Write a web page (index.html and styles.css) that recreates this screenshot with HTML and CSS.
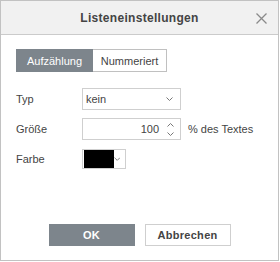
FILE: index.html
```html
<!DOCTYPE html>
<html lang="de">
<head>
  <meta charset="UTF-8">
  <title>Listeneinstellungen</title>
  <link rel="stylesheet" href="styles.css">
</head>
<body>

  <div class="dialog">
    <div class="dialog-header">
      <span class="dialog-title">Listeneinstellungen</span>
      <span class="close-btn">
        <svg width="11" height="11" viewBox="0 0 11 11"><path d="M0.5 0.5L10.5 10.5M10.5 0.5L0.5 10.5" stroke="#8a8a8a" stroke-width="1.3" fill="none"/></svg>
      </span>
    </div>

    <div class="dialog-body">
      <div class="tabs">
        <div class="tab active">Aufzählung</div>
        <div class="tab">Nummeriert</div>
      </div>

      <div class="form-row">
        <label>Typ</label>
        <div class="field select-field">
          <span class="field-text">kein</span>
          <svg class="chevron" width="7" height="4" viewBox="0 0 7 4"><path d="M0.5 0.5L3.5 3.5L6.5 0.5" stroke="#777" fill="none"/></svg>
        </div>
      </div>

      <div class="form-row">
        <label>Größe</label>
        <div class="field spin-field">
          <span class="field-text">100</span>
          <span class="spinner">
            <svg width="7" height="4" viewBox="0 0 7 4"><path d="M0.5 3.5L3.5 0.5L6.5 3.5" stroke="#777" fill="none"/></svg>
            <svg width="7" height="4" viewBox="0 0 7 4"><path d="M0.5 0.5L3.5 3.5L6.5 0.5" stroke="#777" fill="none"/></svg>
          </span>
        </div>
        <span class="unit">% des Textes</span>
      </div>

      <div class="form-row">
        <label>Farbe</label>
        <div class="field color-field">
          <span class="swatch"></span>
          <svg class="chevron" width="7" height="4" viewBox="0 0 7 4"><path d="M0.5 0.5L3.5 3.5L6.5 0.5" stroke="#777" fill="none"/></svg>
        </div>
      </div>
    </div>

    <div class="dialog-footer">
      <button class="button primary">OK</button>
      <button class="button">Abbrechen</button>
    </div>
  </div>

</body>
</html>
```

FILE: styles.css
```css
* {
  box-sizing: border-box;
}

body {
  margin: 0;
  background-color: #fff;
  font-family: Arial, "Liberation Sans", sans-serif;
  font-size: 11px;
  color: #444;
}

.dialog {
  width: 279px;
  height: 261px;
  border: 1px solid #c2c2c2;
  display: flex;
  flex-direction: column;
  background-color: white;
}

.dialog-header {
  height: 34px;
  background-color: #f1f1f1;
  border-bottom: 1px solid #cbcbcb;
  display: flex;
  align-items: center;
  justify-content: center;
  position: relative;
}

.dialog-title {
  font-size: 12px;
  font-weight: bold;
  color: #444;
  letter-spacing: 0.3px;
}

.close-btn {
  position: absolute;
  right: 11px;
  top: 12px;
  display: flex;
}

.dialog-body {
  padding: 14px 15px 0;
}

.tabs {
  display: flex;
  height: 23px;
  margin-bottom: 16px;
}

.tab {
  display: flex;
  align-items: center;
  justify-content: center;
  border: 1px solid #c0c0c0;
  background-color: white;
  color: #444;
}

.tab:first-child {
  width: 77px;
}

.tab:last-child {
  width: 74px;
  border-left: none;
}

.tab.active {
  background-color: #7d858c;
  border-color: #7d858c;
  color: white;
}

.form-row {
  display: flex;
  align-items: center;
  margin-bottom: 8px;
}

.form-row label {
  width: 66px;
}

.field {
  height: 22px;
  border: 1px solid #cfcfcf;
  display: flex;
  align-items: center;
  background-color: white;
}

.select-field {
  width: 99px;
  padding: 0 7px 0 3px;
  justify-content: space-between;
}

.spin-field {
  width: 99px;
  padding: 0 6px 0 3px;
  justify-content: flex-end;
}

.spin-field .field-text {
  margin-right: 8px;
}

.spinner {
  display: flex;
  flex-direction: column;
  gap: 5px;
}

.spinner svg {
  display: block;
}

.unit {
  margin-left: 7px;
}

.color-field {
  width: 44px;
  height: 20px;
  padding: 1px 5px 1px 1px;
  justify-content: space-between;
  margin-top: 1px;
}

.swatch {
  width: 32px;
  height: 18px;
  background-color: #000;
}

.dialog-footer {
  margin-top: auto;
  display: flex;
  justify-content: center;
  gap: 10px;
  padding-bottom: 14px;
}

.button {
  width: 86px;
  height: 22px;
  border: 1px solid #cfcfcf;
  background-color: white;
  font-family: Arial, "Liberation Sans", sans-serif;
  font-size: 11px;
  font-weight: bold;
  color: #444;
  letter-spacing: 0.3px;
  padding: 0;
}

.button.primary {
  background-color: #7d858c;
  border-color: #7d858c;
  color: white;
}
```
